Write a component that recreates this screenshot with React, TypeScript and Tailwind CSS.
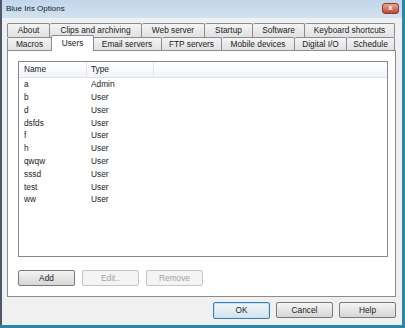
import React from 'react';

const row1 = [
  { label: 'About', w: 43 },
  { label: 'Clips and archiving', w: 92 },
  { label: 'Web server', w: 63 },
  { label: 'Startup', w: 48 },
  { label: 'Software', w: 52 },
  { label: 'Keyboard shortcuts', w: 90 },
];

const row2 = [
  { label: 'Macros', w: 45 },
  { label: 'Users', w: 41 },
  { label: 'Email servers', w: 69 },
  { label: 'FTP servers', w: 60 },
  { label: 'Mobile devices', w: 73 },
  { label: 'Digital I/O', w: 52 },
  { label: 'Schedule', w: 48 },
];

const users = [
  ['a', 'Admin'],
  ['b', 'User'],
  ['d', 'User'],
  ['dsfds', 'User'],
  ['f', 'User'],
  ['h', 'User'],
  ['qwqw', 'User'],
  ['sssd', 'User'],
  ['test', 'User'],
  ['ww', 'User'],
];

function Button({ label, disabled, primary }: { label: string; disabled?: boolean; primary?: boolean }) {
  if (disabled) {
    return (
      <div className="w-[57px] h-[16px] rounded-[2px] border border-[#c2c6c9] bg-[#f4f4f4] text-[#a3a3a3] flex items-center justify-center">
        {label}
      </div>
    );
  }
  if (primary) {
    return (
      <div className="w-[57px] h-[17px] rounded-[2px] border border-[#3c7fb1] bg-gradient-to-b from-[#f0f6fa] to-[#d5e3ee] shadow-[inset_0_0_0_1px_#bfe2f7] flex items-center justify-center">
        {label}
      </div>
    );
  }
  return (
    <div className="w-[57px] h-[16px] rounded-[2px] border border-[#7a7a7a] bg-gradient-to-b from-[#f4f4f4] to-[#d6d6d6] flex items-center justify-center">
      {label}
    </div>
  );
}

export default function App() {
  return (
    <div
      className="w-[405px] h-[328px] bg-[#2a86a8] overflow-hidden text-[8.3px] text-[#222] leading-none"
      style={{ fontFamily: '"Liberation Sans", Arial, sans-serif' }}
    >
      <div className="w-[402px] h-[325px] border-l-2 border-[#4f5866] bg-[#f0f0f0] flex flex-col">
        {/* title bar */}
        <div className="h-[18px] flex items-center justify-between pl-[4px] pr-[3px] bg-gradient-to-b from-[#c2d5ea] to-[#d3e2f1]">
          <span className="text-[8px] text-[#10192a]">Blue Iris Options</span>
          <div className="w-[17px] h-[11px] -mt-[2px] rounded-[3px] border border-[#8f3a2e] bg-gradient-to-b from-[#e9a592] to-[#c4442c] flex items-center justify-center text-white text-[8px] font-bold">
            x
          </div>
        </div>

        {/* body */}
        <div className="flex-1 pl-[5px] pt-[5px] flex flex-col">
          <div className="flex h-[14px]">
            {row1.map((t, i) => (
              <div
                key={t.label}
                style={{ width: t.w }}
                className={`h-full border-t border-r border-[#898c95] rounded-t-[2px] bg-gradient-to-b from-[#f4f4f4] to-[#e1e1e1] flex items-center justify-center ${i === 0 ? 'border-l' : ''}`}
              >
                {t.label}
              </div>
            ))}
          </div>
          <div className="flex items-end h-[13px]">
            {row2.map((t, i) =>
              t.label === 'Users' ? (
                <div
                  key={t.label}
                  className="relative z-10 w-[43px] -mx-[1px] h-[16px] -mb-[1px] border-t border-l border-r border-[#898c95] rounded-t-[2px] bg-white flex items-start pt-[3px] justify-center"
                >
                  {t.label}
                </div>
              ) : (
                <div
                  key={t.label}
                  style={{ width: t.w }}
                  className={`h-full border-t border-r border-[#898c95] rounded-t-[2px] bg-gradient-to-b from-[#f4f4f4] to-[#e1e1e1] flex items-center justify-center ${i === 0 ? 'border-l' : ''}`}
                >
                  {t.label}
                </div>
              )
            )}
          </div>

          {/* tab page */}
          <div className="w-[389px] h-[247px] border border-[#898c95] bg-white pl-[10px] pt-[10px]">
            <div className="w-[370px] h-[196px] border border-[#828790] bg-white flex flex-col">
              <div className="h-[16px] flex border-b border-[#dfe3e8] bg-gradient-to-b from-white to-[#f1f4f8]">
                <div className="w-[68px] border-r border-[#e1e5ea] pl-[5px] flex items-center">Name</div>
                <div className="w-[67px] border-r border-[#e1e5ea] pl-[4px] flex items-center">Type</div>
                <div className="flex-1" />
              </div>
              {users.map(([n, t]) => (
                <div key={n} className="h-[12.8px] flex items-center">
                  <div className="w-[68px] pl-[5px]">{n}</div>
                  <div className="pl-[4px]">{t}</div>
                </div>
              ))}
            </div>
            <div className="flex gap-[7px] mt-[13px]">
              <Button label="Add" />
              <Button label="Edit.." disabled />
              <Button label="Remove" disabled />
            </div>
          </div>

          <div className="flex gap-[6px] mt-[5px] pl-[206px]">
            <Button label="OK" primary />
            <Button label="Cancel" />
            <Button label="Help" />
          </div>
        </div>
      </div>
    </div>
  );
}
